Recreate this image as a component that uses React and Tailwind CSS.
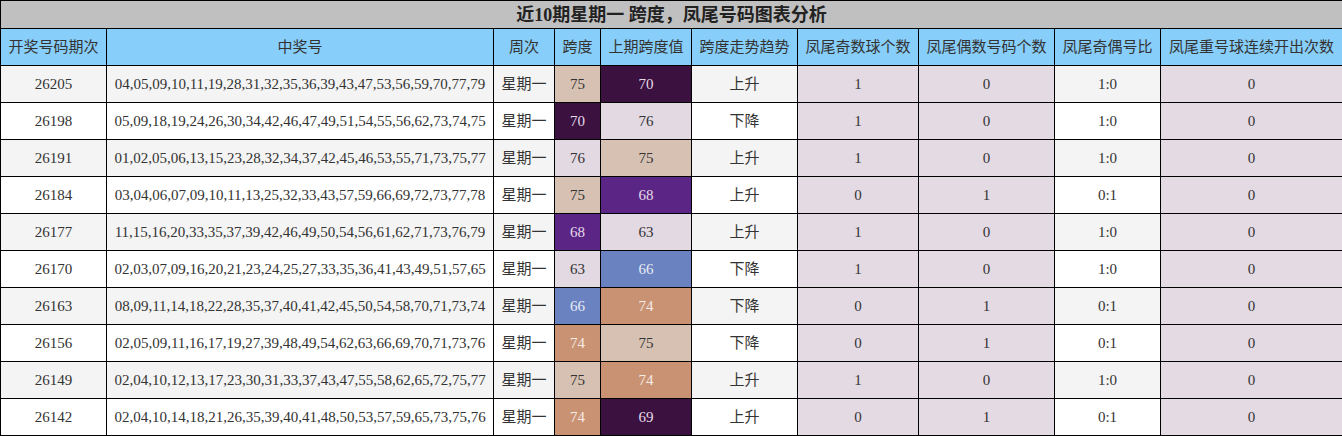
import React from 'react';

const rows = [
    ['26205', '04,05,09,10,11,19,28,31,32,35,36,39,43,47,53,56,59,70,77,79', 75, 70, '上升', 1, 0, '1:0', 0],
    ['26198', '05,09,18,19,24,26,30,34,42,46,47,49,51,54,55,56,62,73,74,75', 70, 76, '下降', 1, 0, '1:0', 0],
    ['26191', '01,02,05,06,13,15,23,28,32,34,37,42,45,46,53,55,71,73,75,77', 76, 75, '上升', 1, 0, '1:0', 0],
    ['26184', '03,04,06,07,09,10,11,13,25,32,33,43,57,59,66,69,72,73,77,78', 75, 68, '上升', 0, 1, '0:1', 0],
    ['26177', '11,15,16,20,33,35,37,39,42,46,49,50,54,56,61,62,71,73,76,79', 68, 63, '上升', 1, 0, '1:0', 0],
    ['26170', '02,03,07,09,16,20,21,23,24,25,27,33,35,36,41,43,49,51,57,65', 63, 66, '下降', 1, 0, '1:0', 0],
    ['26163', '08,09,11,14,18,22,28,35,37,40,41,42,45,50,54,58,70,71,73,74', 66, 74, '下降', 0, 1, '0:1', 0],
    ['26156', '02,05,09,11,16,17,19,27,39,48,49,54,62,63,66,69,70,71,73,76', 74, 75, '下降', 0, 1, '0:1', 0],
    ['26149', '02,04,10,12,13,17,23,30,31,33,37,43,47,55,58,62,65,72,75,77', 75, 74, '上升', 1, 0, '1:0', 0],
    ['26142', '02,04,10,14,18,21,26,35,39,40,41,48,50,53,57,59,65,73,75,76', 74, 69, '上升', 0, 1, '0:1', 0],
];

const headers = ['开奖号码期次', '中奖号', '周次', '跨度', '上期跨度值', '跨度走势趋势', '凤尾奇数球个数', '凤尾偶数号码个数', '凤尾奇偶号比', '凤尾重号球连续开出次数'];
const widths = [106, 387, 61, 46, 91, 106, 121, 136, 106, 182];

// span value -> cell colour
const spanColor = {
    75: 'bg-[#d6c1b3] text-[#333]',
    76: 'bg-[#e3d9e3] text-[#333]',
    63: 'bg-[#e3d9e3] text-[#333]',
    70: 'bg-[#3b1140] text-[#e6dbe8]',
    69: 'bg-[#3b1140] text-[#e6dbe8]',
    68: 'bg-[#5b2586] text-[#e6dbe8]',
    66: 'bg-[#6a82bf] text-[#e6ecf6]',
    74: 'bg-[#c99273] text-[#f6ece6]',
};

const cell = 'border border-black text-center p-0';

const App = () => {
    return (
        <div className="w-[1342px] bg-white" style={{ fontFamily: '"Liberation Serif", "Noto Sans CJK SC", serif' }}>
            <table className="w-[1342px] table-fixed border-collapse text-[15px] text-[#333]">
                <colgroup>
                    {widths.map((w, i) => (
                        <col key={i} style={{ width: w }} />
                    ))}
                </colgroup>
                <thead>
                    <tr className="h-[28px]">
                        <th colSpan={10} className={`${cell} bg-[#c0c0c0] text-[18px] font-bold text-[#222] leading-none`}>
                            近10期星期一 跨度，凤尾号码图表分析
                        </th>
                    </tr>
                    <tr className="h-[37px]">
                        {headers.map((h) => (
                            <th key={h} className={`${cell} bg-[#87cefa] font-normal whitespace-nowrap`}>{h}</th>
                        ))}
                    </tr>
                </thead>
                <tbody>
                    {rows.map((r, i) => {
                        const bg = i % 2 === 0 ? 'bg-[#f4f4f4]' : 'bg-white';
                        return (
                            <tr key={r[0]} className="h-[37px]">
                                <td className={`${cell} ${bg}`}>{r[0]}</td>
                                <td className={`${cell} ${bg} whitespace-nowrap`}>{r[1]}</td>
                                <td className={`${cell} ${bg}`}>星期一</td>
                                <td className={`${cell} ${spanColor[r[2]]}`}>{r[2]}</td>
                                <td className={`${cell} ${spanColor[r[3]]}`}>{r[3]}</td>
                                <td className={`${cell} ${bg}`}>{r[4]}</td>
                                <td className={`${cell} bg-[#e3dae3]`}>{r[5]}</td>
                                <td className={`${cell} bg-[#e3dae3]`}>{r[6]}</td>
                                <td className={`${cell} ${bg}`}>{r[7]}</td>
                                <td className={`${cell} bg-[#e3dae3]`}>{r[8]}</td>
                            </tr>
                        );
                    })}
                </tbody>
            </table>
        </div>
    );
};

export default App;
